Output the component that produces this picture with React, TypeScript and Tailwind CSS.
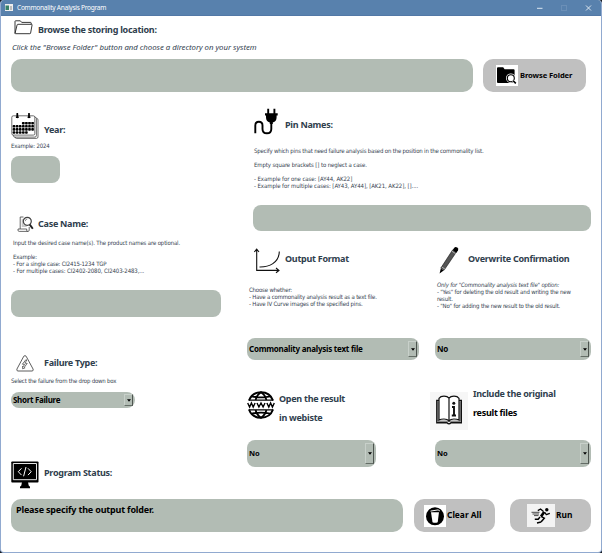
import type { ReactNode } from 'react';

const heading = "whitespace-nowrap font-['Noto_Sans','Open_Sans',sans-serif] text-[9px] leading-[14px] font-bold tracking-[-.27px] text-[#2f404d]";
const small = "whitespace-nowrap font-['DejaVu_Sans_Condensed','DejaVu_Sans',sans-serif] text-[6px] leading-[7px] tracking-[-.175px] text-[#34424f]";
const bold = "whitespace-nowrap font-['Noto_Sans','Open_Sans',sans-serif] font-bold text-black";

function Field({ className, children }: { className: string; children?: ReactNode }) {
  return <div className={`shrink-0 bg-[#b2bcb4] ${className}`}>{children}</div>;
}

function Select({ value, className, text }: { value: string; className: string; text: string }) {
  return (
    <div className={`flex shrink-0 items-center justify-between bg-[#b2bcb4] py-[3px] pl-[2px] pr-[2px] ${className}`}>
      <span className={`${bold} ${text}`}>{value}</span>
      <span className="flex h-full w-[9px] items-center justify-center border-r border-b border-t border-l border-t-[#c8d0ca] border-l-[#c8d0ca] border-r-[#4e5550] border-b-[#646d66]">
        <svg width="4" height="3" viewBox="0 0 5 3"><path d="M0 0h5L2.5 3Z" fill="#000" /></svg>
      </span>
    </div>
  );
}

function FolderIcon() {
  return (
    <svg className="shrink-0" width="19" height="15" viewBox="0 0 19 15" fill="none" stroke="#222" strokeWidth=".9" strokeLinejoin="round">
      <path d="M1 13.5V1.4Q1 .8 1.6.8h4.7l1.4 1.6h8.8q.7 0 .7.7v1.2M1 13.5 3.1 4.9q.2-.6.8-.6h13.7q.6 0 .5.6l-1.5 8.2q-.1.6-.7.6H1.3" />
    </svg>
  );
}
function FolderSearch() {
  return (
    <svg className="shrink-0" width="22" height="21" viewBox="0 0 22 21">
      <path fill="#fff" d="M0 0h22v21H0z" />
      <path d="M1 3.2Q1 2.2 2 2.2h5.2l1.4 2h9q1 0 1 1v11.8q0 1-1 1H2q-1 0-1-1Z" />
      <circle cx="14.8" cy="13.2" r="4.8" fill="#fff" />
      <circle cx="14.8" cy="13.2" r="3.5" fill="#fff" stroke="#000" strokeWidth="1.1" />
      <path d="m17.2 15.7 2.6 2.7" stroke="#fff" strokeWidth="3" /><path d="m17.2 15.7 2.6 2.7" stroke="#000" strokeWidth="1.6" />
    </svg>
  );
}
function CalendarIcon() {
  const days = [0, 1, 2, 3].flatMap((r) => [0, 1, 2, 3, 4, 5, 6].filter((c) => !(r === 0 && c < 3) && !(r === 3 && c > 4)).map((c) => ({ r, c })));
  return (
    <svg className="shrink-0" width="28" height="27" viewBox="0 0 28 27">
      <g fill="#fff" stroke="#333" strokeWidth=".7">
        <rect x="4" y="5.4" width="23" height="20" rx="1.5" /><rect x="2.4" y="4.1" width="23" height="20" rx="1.5" /><rect x=".8" y="2.8" width="23" height="19.3" rx="1.5" />
      </g>
      <path d="M6.3.8v3.5M18 .8v3.5" stroke="#000" strokeWidth="1.8" strokeLinecap="round" />
      <path d="M4.9 4.2h2.8M16.6 4.2h2.8" stroke="#000" strokeWidth="1.6" />
      {days.map(({ r, c }) => <rect key={`${r}-${c}`} x={1.7 + c * 3.1} y={8.9 + r * 3.1} width="2.6" height="2.6" rx=".7" />)}
      <path d="M10.5 10.2h12M1.5 13.3h21M1.5 16.4h21M1.5 19.5h15" stroke="#000" strokeWidth=".5" strokeOpacity=".5" />
    </svg>
  );
}
function CaseIcon() {
  return (
    <svg className="shrink-0" width="17" height="17" viewBox="0 0 17 17" fill="none" stroke="#444" strokeWidth=".8">
      <path d="M6.5 1H3.2v12H1v1.2q0 1.2 1.2 1.2H11q1.2 0 1.2-1.2V11M3.2 13h6.5v1.4q0 1 1 1" />
      <path d="M4.7 4h1.5M4.7 6h1.5M4.7 8h2M4.7 10h5" stroke="#777" />
      <circle cx="10.3" cy="5.3" r="4" strokeWidth="1.2" />
      <path d="m12.8 8.6 3 4.2" strokeWidth="1.9" stroke="#222" /><path d="M8.2 5.2q.2-2 2.1-2.2" strokeWidth=".6" />
    </svg>
  );
}
function PlugIcon() {
  return (
    <svg className="shrink-0" width="25" height="27" viewBox="0 0 25 27" fill="none">
      <path d="M14.2.7v6M20.4.7v6" stroke="#000" strokeWidth="1.9" />
      <path d="M11 5.2h12.7v2.2h-1.1v1.8q0 4.3-3.8 5.2v1.6h-3v-1.6q-3.8-.9-3.8-5.2V7.4H11Z" fill="#000" />
      <path d="M1.3 25.3V17.4q0-3.6 3.6-3.6t3.6 3.6v3.6q0 4.3 4.4 4.3T17.3 21v-6" stroke="#000" strokeWidth="1.9" />
    </svg>
  );
}
function CurveIcon() {
  return (
    <svg className="shrink-0" width="27" height="26" viewBox="0 0 27 26" fill="none" stroke="#111" strokeWidth="1.1">
      <path d="M2.7 1.3v21.1h22M.4 4l2.3-2.8L5 4M22 20l3 2.4-3 2.4" /><path d="M5.5 19C15 19.2 25 15 25.3 3.5" />
    </svg>
  );
}
function PencilIcon() {
  return (
    <svg className="shrink-0" width="21" height="28" viewBox="0 0 21 28">
      <path d="m13.6 4 3.6 2.3L5 24.3 1.8 22.1Z" fill="#555" stroke="#111" strokeWidth=".6" />
      <path d="m13.7 4 1.4-2q1.2-1.6 3.2-.4 1.7 1.2.7 2.9l-1.6 2.3Z" fill="#000" />
      <path d="m12.9 5.2 3.6 2.4M2.8 21l3.3 2.2" stroke="#eee" strokeWidth=".6" />
      <path d="m1.8 22.6 2.9 1.9-4.1 3Z" fill="#000" />
    </svg>
  );
}
function WarningIcon() {
  return (
    <svg className="shrink-0" width="18" height="17" viewBox="0 0 18 17" fill="none" stroke="#333" strokeWidth=".8" strokeLinejoin="round">
      <path d="M7.8 1.2Q9 0 10.1 1.2l7 12.9q.6 1.7-1 1.9H1.9q-1.5-.2-1-1.9Z" />
      <path d="M9.8 4.8 6.4 9.2l2.2.3-1.4 2.2-.6-.6v2.7l2.5-1-.8-.5 2.9-3.9-2.3-.3 2-3.1Z" strokeWidth=".7" />
    </svg>
  );
}
function WebIcon() {
  return (
    <svg className="shrink-0" width="28" height="28" viewBox="0 0 28 28" fill="none" stroke="#000">
      <path d="M2 9.5C4 4 8.5 1.3 14 1.3S24 4 26 9.5M2 18.5c2 5.5 6.5 8.2 12 8.2s10-2.7 12-8.2" strokeWidth="2" />
      <path d="M1.8 9.2h24.4M1.8 18.8h24.4" strokeWidth="1.2" />
      <path d="M8.6 9Q9.7 4 14 1.3 18.3 4 19.4 9M8.6 19q1.1 5 5.4 7.7 4.3-2.7 5.4-7.7M4.7 5.3q9.3 2 18.6 0M4.7 22.7q9.3-2 18.6 0" strokeWidth="1.8" />
      <path d="m.7 12 1.9 4 1.8-4 1.8 4 1.9-4M10 12l1.9 4 2.1-4 2.1 4 1.9-4M19.9 12l1.9 4 1.8-4 1.8 4 1.9-4" strokeWidth="1.4" />
    </svg>
  );
}
function BookIcon() {
  return (
    <svg className="shrink-0" width="38" height="38" viewBox="0 0 38 38" fill="none" stroke="#111" strokeWidth="1.2">
      <path d="M0 0h38v38H0z" fill="#f6f6f6" stroke="none" />
      <path d="M9 8.5H6.8v22.2H17q2 2.2 4 0h10.3V8.5H29" strokeWidth="1.4" />
      <path d="M19 6.2Q17.5 4.2 14 4.2T9 6.3V28q2-1 5-1 3.4 0 5 1.8 1.6-1.8 5-1.8 3 0 5 1V6.3Q27.500 4.2 24 4.2T19 6.2Zm0 0v22.5" fill="#fff" />
      <path d="M8 10v19.2h9.5q1.5 1.2 3 0H30V10" strokeWidth=".7" />
      <circle cx="23.8" cy="11.2" r="1.5" fill="#111" stroke="none" /><path d="M22 15h2v8.500m-2.200 0H26" strokeWidth="1.900" />
    </svg>
  );
}
function MonitorIcon() {
  return (
    <svg className="shrink-0" width="28" height="28" viewBox="0 0 28 28" fill="none">
      <rect x=".3" y=".5" width="27.200" height="21" rx=".8" fill="#000" />
      <path d="M2.300 2.500h23.200v16.200H2.300Z" stroke="#fff" strokeWidth=".9" />
      <path d="m10.500 7.300-3.200 3.400 3.200 3.400M17 7.300l3.200 3.400-3.200 3.400M15 6l-2.400 9.300" stroke="#fff" strokeWidth="1" />
      <path d="M11 21h6l.7 3.500 1.300 1.200v1.600H9v-1.600l1.300-1.200Z" fill="#000" />
    </svg>
  );
}
function TrashIcon() {
  return (
    <svg className="shrink-0" width="22" height="22" viewBox="0 0 22 22">
      <path fill="#fff" d="M0 0h22v22H0z" /><circle cx="11" cy="11.300" r="9" />
      <path d="m7 7.200 1.500 10q2.500 1 5.200 0L15 7.200Z" fill="#fff" /><path d="m6.500 6.100 7.600-1.200 1.700 1" stroke="#fff" strokeWidth="1" fill="none" />
    </svg>
  );
}
function RunnerIcon() {
  return (
    <svg className="shrink-0" width="28" height="23" viewBox="0 0 28 23" fill="none" stroke="#000">
      <path fill="#f3f3f3" stroke="none" d="M0 0h28v23H0z" />
      <circle cx="19.800" cy="5.800" r="1.700" fill="#000" stroke="none" />
      <path d="m16.500 7.500-3-2.500-2.700 1.600M17.500 8l1.800 2.600 3.500-1.300" strokeWidth="1.300" strokeLinejoin="round" />
      <path d="m17.200 8-3.200 4.600" strokeWidth="2.600" />
      <path d="m14 12.300 3.300 1.900-3.300 3.900M13 13l-1.800 2.200H7.800M14 18.100l-4 .8" strokeWidth="1.500" />
      <path d="M4.500 8.300h8M5.500 10h6.500M7 11.600h4.500" strokeWidth=".7" />
    </svg>
  );
}

export default function App() {
  return (
    <div className="h-[553px] w-[602px] overflow-hidden bg-[#161b22]">
      <div className="flex h-full flex-col overflow-hidden rounded-[4px] border-x border-b border-[#91aad0] bg-white">
        <header className="flex h-4 shrink-0 items-center justify-between border-b border-[#5278a6] bg-[#5881ad] pl-1 pr-[9px]">
          <div className="flex items-center gap-1">
            <svg width="8" height="7" viewBox="0 0 8 7"><path fill="#eee" d="M0 0h8v7H0z" /><path fill="#378169" d="M.5 1.5h3.5V6H.5z" /><path fill="#bbb" d="M5 2h2v4H5z" /></svg>
            <span className="whitespace-nowrap font-['Noto_Sans',sans-serif] text-[6.600px] leading-[14px] tracking-[-.28px] text-white">Commonality Analysis Program</span>
          </div>
          <svg width="56" height="8" viewBox="0 0 56 8" fill="none"><path d="M1 4.300h5.500" stroke="#dce6f0" /><rect x="25.500" y="1.500" width="5" height="5" stroke="#6b8fb7" /><path d="m50 1.500 5 5m0-5-5 5" stroke="#e9eff5" strokeWidth=".9" /></svg>
        </header>

        <section className="h-[84px] shrink-0 pl-[10px]">
          <div className="flex items-start gap-[5px] pl-[3px] pt-1">
            <FolderIcon />
            <h2 className={`${heading} mt-[3px]`}>Browse the storing location:</h2>
          </div>
          <p className="mt-[4px] whitespace-nowrap pl-px font-['Noto_Sans',sans-serif] text-[7.800px] leading-[12px] tracking-[-.02px] italic text-[#34424f]">Click the "Browse Folder" button and choose a directory on your system</p>
          <div className="mt-[6px] flex gap-[10px]">
            <Field className="h-[33px] w-[462px] rounded-[10px]" />
            <button className="flex h-[33px] w-[103px] items-center rounded-[10px] bg-[#c0c0c0] pl-[13px]">
              <FolderSearch />
              <span className={`${bold} ml-[2px] text-[7.600px] tracking-[-.1px]`}>Browse Folder</span>
            </button>
          </div>
        </section>

        <main className="flex h-[390px] shrink-0">
          <div className="w-[246px] shrink-0 pl-[10px]">
            <div className="flex gap-[5px] pt-[13px]"><CalendarIcon /><h2 className={`${heading} mt-[10px]`}>Year:</h2></div>
            <p className={`${small} mt-[2px] text-[5.700px] tracking-[-.3px]`}>Example: 2024</p>
            <Field className="mt-[7px] h-[27px] w-[49px] rounded-[8px]" />
            <div className="mt-[33px] flex gap-1 pl-[6px]"><CaseIcon /><h2 className={`${heading} mt-[1px]`}>Case Name:</h2></div>
            <div className={`${small} mt-[6px] pl-[2px]`}>
              <p className="tracking-[-.14px]">Input the desired case name(s). The product names are optional.</p>
              <p className="mt-[7px]">Example:</p><p>- For a single case: CI2415-1234 TGP</p><p className="tracking-[-.1px]">- For multiple cases: CI2402-2080, CI2403-2483,...</p>
            </div>
            <Field className="mt-[16px] h-[27px] w-[210px] rounded-[8px]" />
            <div className="mt-[38px] flex gap-[10px] pl-[5px]"><WarningIcon /><h2 className={`${heading} mt-[1px]`}>Failure Type:</h2></div>
            <p className={`${small} mt-[5px] text-[5.700px] tracking-[-.22px]`}>Select the failure from the drop down box</p>
            <Select value="Short Failure" className="mt-[8px] h-4 w-[124px] rounded-[8px] !py-[2px]" text="text-[8px] tracking-[-.3px]" />
            <div className="mt-[53px] flex gap-[5px]"><MonitorIcon /><h2 className={`${heading} mt-[5px]`}>Program Status:</h2></div>
          </div>

          <div className="w-[354px] shrink-0">
            <div className="flex gap-[6px] pl-[7px] pt-2"><PlugIcon /><h2 className={`${heading} mt-[10px]`}>Pin Names:</h2></div>
            <div className={`${small} mt-[12px] pl-[7px]`}>
              <p>Specify which pins that need failure analysis based on the position in the commonality list.</p>
              <p className="mt-[7px] tracking-[-.12px]">Empty square brackets [] to neglect a case.</p>
              <p className="mt-[7px] tracking-[-.07px]">- Example for one case: [AY44, AK22]</p><p className="tracking-[-.07px]">- Example for multiple cases: [AY43, AY44], [AK21, AK22], []....</p>
            </div>
            <Field className="ml-[6px] mt-[16px] h-[26px] w-[338px] rounded-[8px]" />
            <div className="mt-[15px] flex h-[92px]">
              <div className="w-[188px] shrink-0">
                <div className="flex h-7 gap-1 pl-[7px] pt-[2px]"><CurveIcon /><h2 className={`${heading} mt-[4px]`}>Output Format</h2></div>
                <div className={`${small} mt-[12px] pl-[2px]`}><p>Choose whether:</p><p>- Have a commonality analysis result as a text file.</p><p>- Have IV Curve images of the specified pins.</p></div>
              </div>
              <div className="w-[166px]">
                <div className="flex h-7 gap-[8px] pl-1"><PencilIcon /><h2 className={`${heading} mt-[6px]`}>Overwrite Confirmation</h2></div>
                <div className={`${small} mt-[7px] pl-[2px]`}><p className="italic">Only for "Commonality analysis text file" option:</p><p>- "Yes" for deleting the old result and writing the new</p><p>result.</p><p>- "No" for adding the new result to the old result.</p></div>
              </div>
            </div>
            <div className="flex gap-4">
              <Select value="Commonality analysis text file" className="h-[22px] w-[172px] rounded-[8px]" text="text-[8px] tracking-[-.24px]" />
              <Select value="No" className="h-[22px] w-[156px] rounded-[8px]" text="text-[8px] tracking-[-.2px]" />
            </div>
            <div className="mt-[24px] flex h-[56px]">
              <div className="flex w-[183px] gap-1 pt-[7px]"><WebIcon /><h2 className={`${heading} mt-[-2px] leading-[19px]`}>Open the result<br />in webiste</h2></div>
              <div className="flex gap-[5px] pt-2"><BookIcon /><h2 className={`${heading} mt-[-8px] leading-[19px]`}>Include the original<br /><span className="text-black">result files</span></h2></div>
            </div>
            <div className="flex gap-[59px]">
              <Select value="No" className="h-[27px] w-[129px] rounded-[8px]" text="text-[7.500px]" />
              <Select value="No" className="h-[27px] w-[156px] rounded-[8px]" text="text-[7.500px]" />
            </div>
          </div>
        </main>

        <footer className="flex pl-[10px] pt-[9px]">
          <Field className="h-[33px] w-[392px] rounded-[10px] pl-[5px] pt-[4px]"><p className={`${bold} text-[9px] leading-[14px] tracking-[-.18px]`}>Please specify the output folder.</p></Field>
          <button className="ml-[11px] flex h-[33px] w-[81px] items-center rounded-[10px] bg-[#c0c0c0] pl-[10px]"><TrashIcon /><span className={`${bold} ml-px text-[8.400px]`}>Clear All</span></button>
          <button className="ml-[15px] flex h-[33px] w-[81px] items-center rounded-[10px] bg-[#c0c0c0] pl-[17px]"><RunnerIcon /><span className={`${bold} ml-px text-[8.400px]`}>Run</span></button>
        </footer>
      </div>
    </div>
  );
}
